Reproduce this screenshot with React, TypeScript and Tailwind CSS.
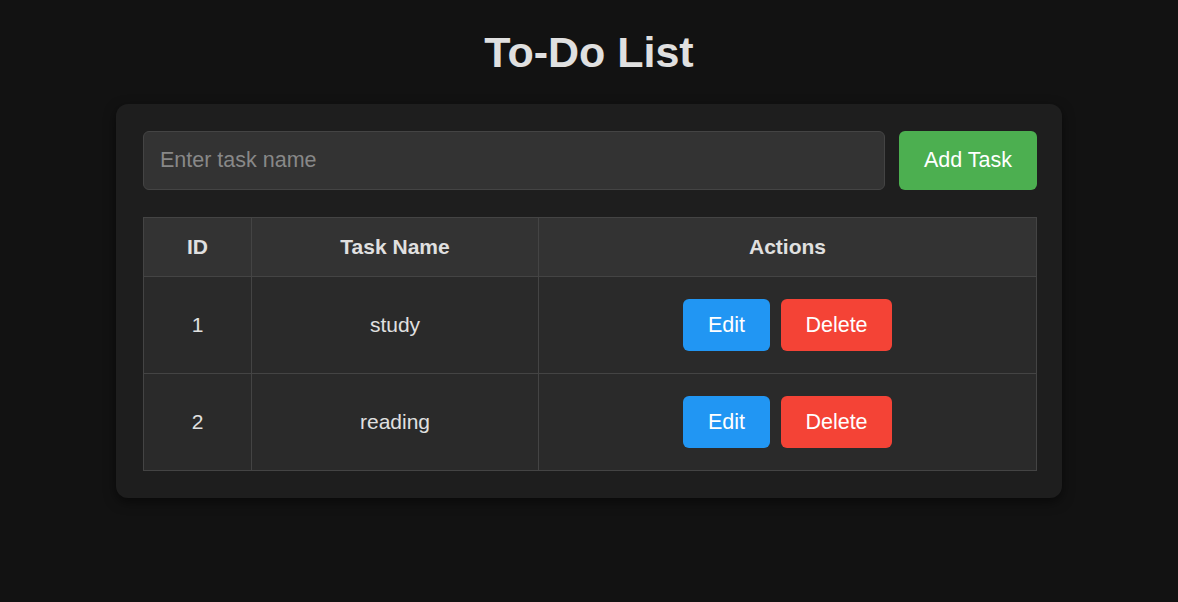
import { useState } from 'react'

type Task = { id: number; name: string }

export default function App() {
  const [tasks] = useState<Task[]>([
    { id: 1, name: 'study' },
    { id: 2, name: 'reading' },
  ])

  return (
    <div className="min-h-screen bg-[#121212] text-[#e0e0e0] font-['Liberation_Sans',Arial,sans-serif]">
      <h1 className="pt-[26px] pb-[26px] text-center text-[43px] font-bold leading-[52px] text-[#e0e0e0]">
        To-Do List
      </h1>
      <div className="mx-auto w-[946px] rounded-xl bg-[#1e1e1e] py-[27px] pl-[27px] pr-[25px] shadow-[0_4px_12px_rgba(0,0,0,0.5)]">
        <div className="flex gap-[14px]">
          <input
            type="text"
            placeholder="Enter task name"
            className="h-[59px] flex-1 rounded-md border border-[#444] bg-[#333] px-4 text-[21.5px] text-[#e0e0e0] outline-none placeholder:text-[#888]"
          />
          <button className="h-[59px] w-[138px] rounded-md bg-[#4caf50] text-[21.5px] text-white">
            Add Task
          </button>
        </div>

        <table className="mt-[27px] w-full border-collapse text-[21px]">
          <thead>
            <tr className="h-[59px] bg-[#333]">
              <th className="w-[108px] border border-[#444] font-bold">ID</th>
              <th className="w-[287px] border border-[#444] font-bold">Task Name</th>
              <th className="border border-[#444] font-bold">Actions</th>
            </tr>
          </thead>
          <tbody>
            {tasks.map((t) => (
              <tr key={t.id} className="h-[97px] bg-[#2a2a2a]">
                <td className="border border-[#444] text-center">{t.id}</td>
                <td className="border border-[#444] text-center">{t.name}</td>
                <td className="border border-[#444] text-center">
                  <div className="flex justify-center gap-[11px]">
                    <button className="h-[52px] w-[87px] rounded-md bg-[#2196f3] text-[21.5px] text-white">Edit</button>
                    <button className="h-[52px] w-[111px] rounded-md bg-[#f44336] text-[21.5px] text-white">Delete</button>
                  </div>
                </td>
              </tr>
            ))}
          </tbody>
        </table>
      </div>
    </div>
  )
}
